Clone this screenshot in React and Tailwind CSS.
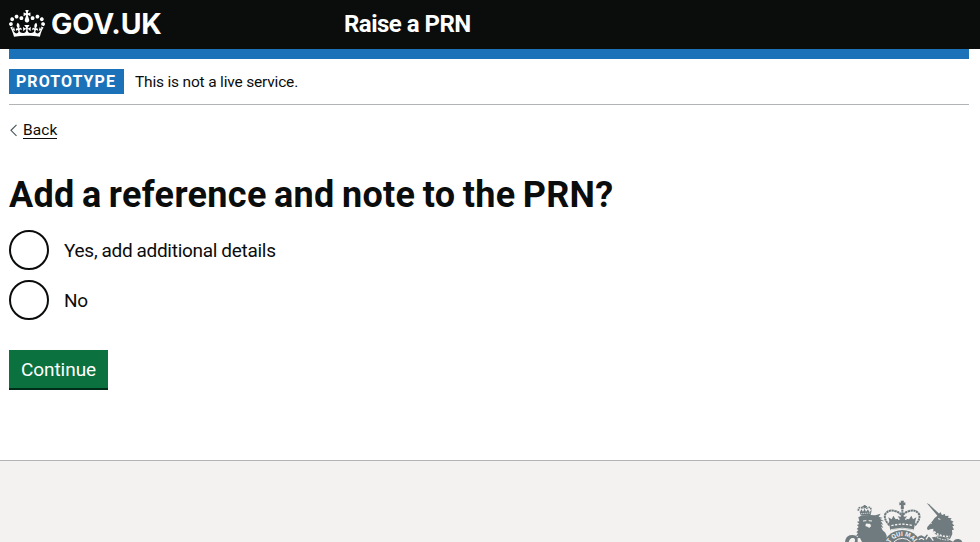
import React from 'react';

function Crown() {
  return (
    <svg viewBox="0 0 132 97" className="h-[27px] w-9 shrink-0 fill-white" preserveAspectRatio="none" aria-hidden="true">
      <path fillRule="evenodd" d="M25 30.2c3.5 1.5 7.7-.2 9.1-3.7 1.5-3.6-.2-7.8-3.9-9.2-3.6-1.4-7.6.3-9.1 3.9-1.4 3.5.3 7.5 3.9 9zM9 39.5c3.6 1.5 7.8-.2 9.2-3.7 1.5-3.6-.2-7.8-3.9-9.1-3.6-1.5-7.6.2-9.1 3.8-1.4 3.5.3 7.5 3.8 9zM4.4 57.2c3.5 1.5 7.7-.2 9.1-3.8 1.5-3.6-.2-7.7-3.9-9.1-3.5-1.5-7.6.3-9.1 3.8-1.4 3.5.3 7.6 3.9 9.1zm38.3-21.4c3.5 1.5 7.7-.2 9.1-3.8 1.5-3.6-.2-7.7-3.9-9.1-3.6-1.5-7.6.3-9.1 3.8-1.3 3.6.4 7.7 3.9 9.1zm64.4-5.6c-3.6 1.5-7.8-.2-9.1-3.7-1.5-3.6.2-7.8 3.8-9.2 3.6-1.4 7.7.3 9.2 3.9 1.3 3.5-.4 7.5-3.9 9zm15.9 9.3c-3.6 1.5-7.7-.2-9.1-3.7-1.5-3.6.2-7.8 3.7-9.1 3.6-1.5 7.7.2 9.2 3.8 1.5 3.5-.3 7.5-3.8 9zm4.7 17.7c-3.6 1.5-7.8-.2-9.2-3.8-1.5-3.6.2-7.7 3.9-9.1 3.6-1.5 7.7.3 9.2 3.8 1.3 3.5-.4 7.6-3.9 9.1zM89.3 35.8c-3.6 1.5-7.8-.2-9.2-3.8-1.4-3.6.2-7.7 3.9-9.1 3.6-1.5 7.7.3 9.1 3.8 1.4 3.6-.3 7.7-3.8 9.1zM69.7 17.7l8.9 4.7V9.3l-8.9 2.8c-.2-.3-.5-.6-.9-.9L72.4 0H59.6l3.5 11.2c-.3.3-.6.5-.9.9l-8.8-2.8v13.1l8.8-4.7c.3.3.6.7.9.9l-5 15.4v.1c-.2.8-.4 1.6-.4 2.4 0 4.1 3.1 7.5 7 8.1h.2c.3 0 .7.1 1 .1.4 0 .7 0 1-.1h.2c4-.6 7.1-4.1 7.1-8.1 0-.8-.1-1.7-.4-2.4V34l-5.1-15.4c.4-.2.7-.6 1-.9zM66 92.8c16.9 0 32.8 1.1 47.1 3.2 4-16.9 8.9-26.7 14-33.5l-9.6-3.4c1 4.9 1.1 7.2 0 10.2-1.5-1.4-3-4.3-4.2-8.7L108.6 76c2.8-2 5-3.2 7.5-3.3-4.4 9.4-10 11.9-13.6 11.2-4.3-.8-6.3-4.6-5.6-7.9 1-4.7 5.7-5.9 8-.5 4.3-8.7-3-11.4-7.6-8.8 7.1-7.2 7.9-13.5 2.1-21.1-8 6.1-8.1 12.3-4.5 20.8-4.7-5.4-12.1-2.5-9.5 6.2 3.4-5.2 7.9-2 7.2 3.1-.6 4.3-6.4 7.8-13.5 7.2-10.3-.9-10.9-8-11.2-13.8 2.5-.5 7.1 1.8 11 7.3L80.2 60c-4.1 4.4-8 5.3-12.3 5.4 1.4-4.4 8-11.6 8-11.6H55.5s6.4 7.2 7.9 11.6c-4.2-.1-8-1-12.3-5.4l1.4 16.4c3.9-5.5 8.5-7.7 10.9-7.3-.3 5.8-.9 12.8-11.1 13.8-7.2.6-12.9-2.9-13.5-7.2-.7-5 3.8-8.3 7.1-3.1 2.7-8.7-4.6-11.6-9.4-6.2 3.7-8.5 3.6-14.7-4.6-20.8-5.8 7.6-5 13.9 2.2 21.1-4.7-2.6-11.9.1-7.7 8.8 2.3-5.5 7.1-4.2 8.1.5.7 3.3-1.3 7.1-5.7 7.9-3.5.7-9-1.8-13.5-11.2 2.5.1 4.7 1.3 7.5 3.3l-4.7-15.4c-1.2 4.4-2.7 7.2-4.3 8.7-1.1-3-.9-5.3 0-10.2l-9.5 3.4c5 6.9 9.9 16.7 14 33.5 14.8-2.1 30.8-3.2 47.7-3.2z" />
    </svg>
  );
}

function Crest() {
  return (
    <svg viewBox="27 30 375 126" className="h-[42px] w-[125px] shrink-0" aria-hidden="true">
      <g fill="#6f7b7e" stroke="none">
        {/* lion's crown */}
        <path d="M73 62l4 14 30-1 3-14-7 5-4-8-6 7-4-9-5 9-5-7-4 8z" />
        <path d="M70 62q0-12 10-9t10-4q1 8 9 4t10 9" fill="none" stroke="#6f7b7e" strokeWidth="5" strokeDasharray="5 2" />
        <path d="M86 45h6v9h-6zM82 48h14v3H82z" />
        {/* lion's head and mane */}
        <path d="M70 82l11-6 24-1 16 1 16-5-6 9 12 4-8 2 12 8-10-1 8 11-7-2 7 12-7-3 5 10 8 7 4 9v19H81l-6-12-10 1 5-8-7 1 6-9-5-2 6-7-5-3 6-6-5-6 7-3-7-7 7-1z" />
        {/* tail */}
        <path d="M30 156q2-16 14-20 16-4 24 6v14h-9q4-12-6-12-8 0-12 12z" />
        {/* central crown */}
        <path d="M197 32h10l-1 6 5-1v9l-5-1 1 11h-10l1-11-5 1v-9l5 1z" />
        <path d="M164 97l-4-15 10 6 5-11 7 11 8-2-2 12zM240 97l4-15-10 6-5-11-7 11-8-2 2 12zM190 97l4-10-6-8 9 1 5-9 5 9 9-1-6 8 4 10z" />
        <path d="M161 95q40-12 80 0l-5 26q-35-9-70 0z" />
        {/* unicorn */}
        <path d="M275 39l7 4 39 36-8 5z" />
        <path d="M299 84l10-8 7-10 5 9 9-3 1 6 10-1-2 6 11 2-4 5 10 5-5 4 7 8-6 2 5 10-6 1 1 12-7 15-40-12q-12-8-10-19l-10 2q-5 4-9-1l1-6 13-15z" />
        <path d="M243 156q0-17 16-20l10 5 7-8 10 10q26-8 42-2l27 15z" />
        <path d="M354 156q5-11 17-9 9 2 11 9z" />
        {/* garter */}
        <circle cx="202" cy="180" r="60" />
      </g>
      <g fill="none" stroke="#6f7b7e">
        <path d="M163 106q-18-20-12-34 11-15 29-9 14 4 20 13M240 106q18-20 12-34-11-15-29-9-14 4-20 13" strokeWidth="6" strokeDasharray="7 1.5" />
        <path d="M202 52v38" strokeWidth="6" strokeDasharray="6 1.5" />
      </g>
      <g fill="none" stroke="#f3f2f1">
        <path d="M169 107q33-9 65 0" strokeWidth="4" strokeDasharray="7 4" />
        <path d="M167 119q35-9 69 0" strokeWidth="2.5" />
        <path d="M84 93l10-1M101 92l10 1" strokeWidth="3" />
        <path d="M93 101l12 1 3 6-5 5-5-3-6-2z" fill="#f3f2f1" strokeWidth="1" />
        <path d="M78 71l28-2" strokeWidth="2" strokeDasharray="4 2" />
        <path d="M46 156q3-12 9-10" strokeWidth="4" />
        <path d="M309 86l7 2" strokeWidth="3" />
        <path d="M286 101l5-1" strokeWidth="2" />
        <path d="M297 125q21 17 48 14" strokeWidth="5" strokeDasharray="6 4" />
        <path d="M292 134q23 17 49 16" strokeWidth="3" strokeDasharray="5 3" />
        <path d="M273 148l8-12 5 4 9 12M252 149q7-8 15 0" strokeWidth="4" />
        <circle cx="202" cy="180" r="35" strokeWidth="3" />
      </g>
      <path id="garter-line" d="M160 180a42 42 0 0 1 84 0" fill="none" />
      <text className="fill-[#f3f2f1] font-['Roboto',sans-serif] text-[19px] font-bold">
        <textPath href="#garter-line" startOffset="50%" textAnchor="middle">T QUI MAL</textPath>
      </text>
    </svg>
  );
}

function Radio({ label }) {
  return (
    <label className="flex h-10 items-center gap-[15px]">
      <input type="radio" name="details" className="size-10 shrink-0 appearance-none rounded-full border-2 border-[#0b0c0c] bg-white" />
      <span className="text-[19px] leading-[25px] tracking-[-0.27px] [word-spacing:-0.4px]">{label}</span>
    </label>
  );
}

export default function App() {
  return (
    <div className="flex h-[542px] w-full flex-col overflow-hidden bg-white font-['Roboto','Liberation_Sans',sans-serif] text-[#0b0c0c]">
      <header className="flex h-[49px] shrink-0 items-center bg-[#0b0c0c] pb-px pl-[9px] text-white">
        <div className="flex w-[335px] items-center gap-[6px]">
          <div className="-mt-[2px]"><Crown /></div>
          <span className="font-['Inter','Liberation_Sans',sans-serif] text-[28.5px] font-bold leading-[30px] tracking-[-0.15px]">GOV.UK</span>
        </div>
        <span className="text-2xl font-bold leading-[30px] tracking-[-0.52px]">Raise a PRN</span>
      </header>

      <div className="mx-[9px] mr-[11px] flex grow flex-col items-start">
        <div className="h-[10px] w-full shrink-0 bg-[#1c72b8]" />
        <div className="flex w-full items-center gap-[11px] border-b border-[#b1b4b6] py-[10px]">
          <strong className="h-[25px] w-[115px] whitespace-nowrap bg-[#1c72b8] pl-[7px] text-base font-bold leading-[25px] tracking-[1.05px] text-white">PROTOTYPE</strong>
          <span className="h-[25px] text-[15.5px] leading-[27px] tracking-[-0.18px]">This is not a live service.</span>
        </div>

        <a href="#" className="mt-[15px] flex h-5 items-start">
          <svg viewBox="0 0 14 20" className="h-5 w-[14px] fill-none stroke-[#505a5f]" aria-hidden="true">
            <path d="M7.5 4.8L2 10.3l5.5 5.5" strokeWidth="1.2" />
          </svg>
          <span className="h-[19px] border-b border-[#0b0c0c] text-[15.5px] leading-[20px] tracking-[0.1px]">Back</span>
        </a>

        <h1 className="mt-[35px] whitespace-nowrap text-4xl font-bold leading-10 tracking-[0.33px] [word-spacing:-2px]">Add a reference and note to the PRN?</h1>

        <div className="mt-[15px] flex flex-col gap-[10px]">
          <Radio label="Yes, add additional details" />
          <Radio label="No" />
        </div>

        <button className="mt-[30px] h-10 w-[99px] border-b-2 border-[#002d18] bg-[#0b713f] pt-px text-center text-[19px] leading-[37px] tracking-[-0.05px] text-white">Continue</button>
      </div>

      <footer className="flex h-[82px] shrink-0 justify-end border-t border-[#b1b4b6] bg-[#f3f2f1] pr-[11px] pt-[39px]">
        <Crest />
      </footer>
    </div>
  );
}
